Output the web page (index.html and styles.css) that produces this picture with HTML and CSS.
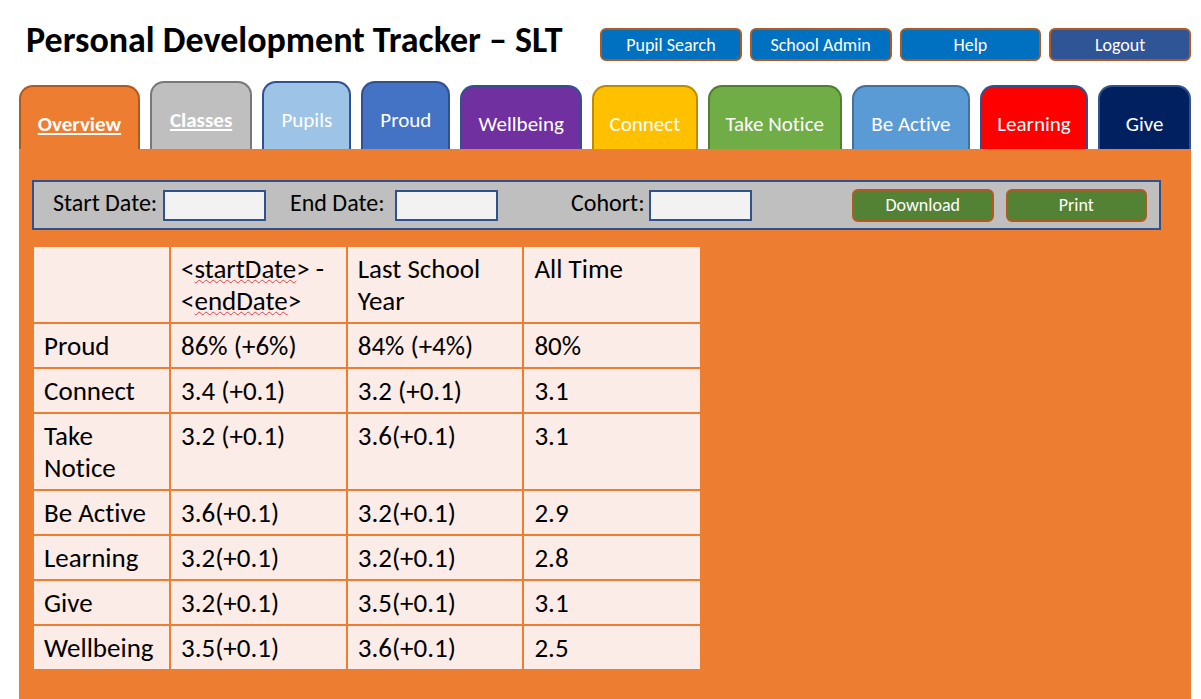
FILE: index.html
```html
<!DOCTYPE html>
<html lang="en">
<head>
<meta charset="utf-8">
<title>Personal Development Tracker – SLT</title>
<link rel="stylesheet" href="styles.css">
</head>
<body class="page">
  <header class="header">
    <h1 class="title">Personal Development Tracker – SLT</h1>
    <div class="actions">
      <button class="button" type="button">Pupil Search</button>
      <button class="button" type="button">School Admin</button>
      <button class="button" type="button">Help</button>
      <button class="button button-logout" type="button">Logout</button>
    </div>
  </header>
  <nav class="tabs">
    <a class="tab tab-overview" href="#">Overview</a>
    <a class="tab tab-classes" href="#">Classes</a>
    <a class="tab tab-pupils" href="#">Pupils</a>
    <a class="tab tab-proud" href="#">Proud</a>
    <a class="tab tab-wellbeing" href="#">Wellbeing</a>
    <a class="tab tab-connect" href="#">Connect</a>
    <a class="tab tab-notice" href="#">Take Notice</a>
    <a class="tab tab-active" href="#">Be Active</a>
    <a class="tab tab-learning" href="#">Learning</a>
    <a class="tab tab-give" href="#">Give</a>
  </nav>
  <main class="panel">
    <form class="filters">
      <div class="field field-start">
        <label class="label" for="start">Start Date:</label>
        <input class="input" id="start" type="text">
      </div>
      <div class="field field-end">
        <label class="label" for="end">End Date:</label>
        <input class="input" id="end" type="text">
      </div>
      <div class="field field-cohort">
        <label class="label" for="cohort">Cohort:</label>
        <input class="input" id="cohort" type="text">
      </div>
      <div class="exports">
        <button class="button button-export" type="button">Download</button>
        <button class="button button-export" type="button">Print</button>
      </div>
    </form>
    <table class="results">
      <colgroup><col class="col-name"><col><col><col></colgroup>
      <thead>
        <tr>
          <td></td>
          <th scope="col"><span class="line">&lt;<span class="misspelt">startDate</span>&gt; -</span> <span class="line">&lt;<span class="misspelt">endDate</span>&gt;</span></th>
          <th scope="col">Last School Year</th>
          <th scope="col">All Time</th>
        </tr>
      </thead>
      <tbody>
        <tr><th scope="row">Proud</th><td>86% (+6%)</td><td>84% (+4%)</td><td>80%</td></tr>
        <tr><th scope="row">Connect</th><td>3.4 (+0.1)</td><td>3.2 (+0.1)</td><td>3.1</td></tr>
        <tr><th scope="row">Take Notice</th><td>3.2 (+0.1)</td><td>3.6(+0.1)</td><td>3.1</td></tr>
        <tr><th scope="row">Be Active</th><td>3.6(+0.1)</td><td>3.2(+0.1)</td><td>2.9</td></tr>
        <tr><th scope="row">Learning</th><td>3.2(+0.1)</td><td>3.2(+0.1)</td><td>2.8</td></tr>
        <tr><th scope="row">Give</th><td>3.2(+0.1)</td><td>3.5(+0.1)</td><td>3.1</td></tr>
        <tr><th scope="row">Wellbeing</th><td>3.5(+0.1)</td><td>3.6(+0.1)</td><td>2.5</td></tr>
      </tbody>
    </table>
  </main>
</body>
</html>
```
FILE: styles.css
```css
* {
  box-sizing: border-box;
}

.page {
  display: flex;
  flex-direction: column;
  min-height: 100vh;
  margin: 0;
  padding: 0 10px 0 19px;
  background: #fff;
  color: #000;
  font-family: Carlito, Lato, sans-serif;
  font-variant-ligatures: none;
}

.header {
  display: grid;
  grid-template-columns: 581fr 591fr;
  align-items: start;
  padding: 20px 0 12px;
}

.title {
  margin: 0;
  padding-left: 7px;
  font-size: 36px;
  line-height: 40px;
  font-weight: 700;
  white-space: nowrap;
}

.actions {
  display: flex;
  gap: 8px;
  padding-top: 8px;
}

.button {
  flex: 1;
  height: 33px;
  padding: 0;
  border: 2px solid #ae5a21;
  border-radius: 6px;
  background: #0070c0;
  color: #fff;
  font-family: inherit;
  font-size: 18px;
  line-height: 24px;
}

.button-logout {
  background: #2f5597;
}

.button-export {
  background: #548235;
}

.tabs {
  display: flex;
  align-items: flex-end;
  gap: 10px;
  height: 68px;
  margin-top: 8px;
}

.tab {
  flex: 1 1 0;
  height: 64px;
  padding-top: 25px;
  border: 2px solid #2f528f;
  border-bottom: 0;
  border-radius: 14px 14px 0 0;
  color: #fff;
  font-size: 21px;
  line-height: 24px;
  text-align: center;
  text-decoration: none;
  white-space: nowrap;
}

.tab-overview {
  flex-grow: 121;
  background: #ed7d31;
  border-color: #ae5a21;
  font-weight: 700;
  text-decoration: underline;
}

.tab-classes {
  flex-grow: 102;
  height: 68px;
  background: #bfbfbf;
  border-color: #787878;
  font-weight: 700;
  text-decoration: underline;
}

.tab-pupils {
  flex-grow: 88;
  height: 68px;
  background: #9dc3e6;
}

.tab-proud {
  flex-grow: 88;
  height: 68px;
  background: #4472c4;
}

.tab-wellbeing {
  flex-grow: 122;
  background: #7030a0;
}

.tab-connect {
  flex-grow: 105;
  background: #ffc000;
  border-color: #bc8c00;
}

.tab-notice {
  flex-grow: 135;
  background: #70ad47;
  border-color: #507e32;
}

.tab-active {
  flex-grow: 118;
  background: #5b9bd5;
  border-color: #41719c;
}

.tab-learning {
  flex-grow: 108;
  background: #f00;
}

.tab-give {
  flex-grow: 92;
  background: #002060;
}

.panel {
  flex: 1;
  padding: 31px 30px 29px 13px;
  background: #ed7d31;
}

.filters {
  display: flex;
  align-items: center;
  height: 50px;
  padding: 0 12px 0 19px;
  border: 2px solid #2f528f;
  background: #bfbfbf;
}

.field {
  display: flex;
  align-items: center;
  justify-content: space-between;
  font-size: 24px;
  line-height: 28px;
  white-space: nowrap;
}

.field-start {
  width: 213px;
}

.field-end {
  width: 208px;
  margin-left: 24px;
}

.field-cohort {
  width: 181px;
  margin-left: 73px;
}

.label {
  padding-bottom: 4px;
}

.input {
  width: 103px;
  height: 31px;
  padding: 0 6px;
  border: 2px solid #2f528f;
  border-radius: 0;
  background: #f2f2f2;
  font: inherit;
}

.exports {
  display: flex;
  gap: 12px;
  width: 295px;
  margin-left: auto;
}

.results {
  width: 59%;
  margin: 17px 0 0 2px;
  border-collapse: collapse;
  table-layout: fixed;
  background: #fbece7;
  font-size: 27px;
  line-height: 32px;
}

.col-name {
  width: 136px;
}

.results th,
.results td {
  padding: 6px 10px 5px;
  border: 2px solid #ed7d31;
  font-weight: 400;
  text-align: left;
  vertical-align: top;
}

.results tr > :first-child {
  border-left: 0;
}

.results tr > :last-child {
  border-right: 0;
}

.results thead tr > * {
  border-top: 0;
}

.results tbody tr:last-child > * {
  border-bottom: 0;
}

.line {
  display: block;
}

.misspelt {
  text-decoration: underline wavy #e0404c 1px;
  text-decoration-skip-ink: none;
}
```
